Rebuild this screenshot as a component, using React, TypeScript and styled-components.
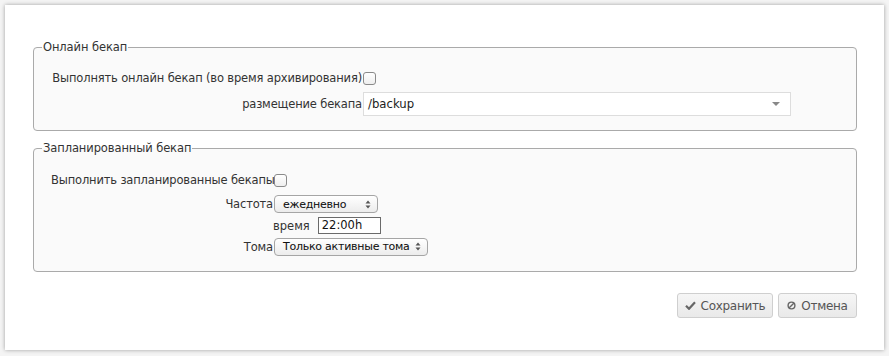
import React from "react";
import styled, { createGlobalStyle } from "styled-components";

const Global = createGlobalStyle`
  html, body { margin: 0; padding: 0; background: #f4f4f4; }
  body { font-family: "DejaVu Sans", Verdana, sans-serif; font-size: 12px; color: #333; }
`;

const Card = styled.div`
  margin: 5px;
  width: 879px;
  height: 345px;
  box-sizing: border-box;
  background: #fff;
  box-shadow: 0 0 4px rgba(0, 0, 0, 0.35);
  padding: 35px 27px 0 28px;
  display: flex;
  flex-direction: column;
  gap: 10px;
`;

const Fieldset = styled.fieldset<{ $h: number }>`
  margin: 0;
  height: ${(p) => p.$h}px;
  box-sizing: border-box;
  border: 1px solid #aaa;
  border-radius: 4px;
  background: #fafafa;
  padding: 10px 0 0 17px;
  min-width: 0;
`;

const Legend = styled.legend`
  padding: 0 1px;
  margin-left: -9px;
  font-size: 11.5px;
  letter-spacing: -0.1px;
  color: #333;
  line-height: 14px;
`;

const Grid = styled.div<{ $col: number; $rows: string }>`
  display: grid;
  grid-template-columns: ${(p) => p.$col}px auto;
  grid-template-rows: ${(p) => p.$rows};
  column-gap: 1px;
  align-items: center;
`;

const Label = styled.div`
  text-align: right;
  white-space: nowrap;
  line-height: 14px;
  font-size: 11.5px;
  letter-spacing: -0.16px;
  color: #333;
`;

const Check = styled.span`
  display: inline-block;
  width: 11px;
  height: 11px;
  border: 1px solid #8a8a8a;
  border-radius: 3px;
  background: linear-gradient(#fff, #eee);
  box-sizing: content-box;
`;

const Cell = styled.div`
  display: flex;
  align-items: center;
`;

const ComboBox = styled.div`
  width: 428px;
  height: 24px;
  box-sizing: border-box;
  border: 1px solid #ddd;
  background: #fff;
  display: flex;
  align-items: center;
  justify-content: space-between;
  padding: 0 10px 0 4px;
  font-size: 11.7px;
  color: #222;
`;

const MacSelect = styled.div<{ $w: number }>`
  width: ${(p) => p.$w}px;
  height: 18px;
  box-sizing: border-box;
  border: 1px solid #a5a5a5;
  border-radius: 4px;
  background: linear-gradient(#ffffff, #ececec);
  display: flex;
  align-items: center;
  justify-content: space-between;
  padding: 0 6px 0 8px;
  font-size: 11px;
  letter-spacing: -0.25px;
  white-space: nowrap;
  color: #111;
  -webkit-text-stroke: 0.05px #111;
`;

const TimeWrap = styled.div`
  display: flex;
  align-items: center;
  gap: 8px;
  margin-left: -1px;
  font-size: 11.5px;
`;

const TimeInput = styled.div`
  width: 63px;
  height: 17px;
  box-sizing: border-box;
  border: 1px solid #6a6a6a;
  background: #fff;
  padding: 0 3px;
  font-size: 11.5px;
  line-height: 15px;
  color: #111;
`;

const Footer = styled.div`
  display: flex;
  justify-content: flex-end;
  gap: 5px;
  margin-top: 11px;
`;

const Button = styled.div<{ $w: number }>`
  width: ${(p) => p.$w}px;
  height: 25px;
  box-sizing: border-box;
  border: 1px solid #cfcfcf;
  border-radius: 3px;
  background: linear-gradient(#f6f6f6, #e9e9e9);
  display: flex;
  align-items: center;
  justify-content: center;
  gap: 5px;
  font-size: 12px;
  letter-spacing: -0.3px;
  color: #555;
`;

const Arrows = () => (
  <svg width="6" height="9" viewBox="0 0 6 9">
    <path d="M3 0.5 L5.5 3.5 H0.5 Z M3 8.5 L5.5 5.5 H0.5 Z" fill="#555" />
  </svg>
);

export default function App() {
  return (
    <>
      <Global />
      <Card>
        <Fieldset $h={91}>
          <Legend>Онлайн бекап</Legend>
          <Grid $col={311} $rows="28px 24px">
            <Label>Выполнять онлайн бекап (во время архивирования)</Label>
            <Cell>
              <Check />
            </Cell>
            <Label>размещение бекапа</Label>
            <Cell>
              <ComboBox>
                <span>/backup</span>
                <svg width="8" height="4" viewBox="0 0 8 4">
                  <path d="M0 0 H8 L4 4 Z" fill="#888" />
                </svg>
              </ComboBox>
            </Cell>
          </Grid>
        </Fieldset>
        <Fieldset $h={131}>
          <Legend>Запланированный бекап</Legend>
          <Grid $col={222} $rows="30px 18px 25px 17px">
            <Label>Выполнить запланированные бекапы</Label>
            <Cell>
              <Check />
            </Cell>
            <Label>Частота</Label>
            <Cell>
              <MacSelect $w={104}>
                <span>ежедневно</span>
                <Arrows />
              </MacSelect>
            </Cell>
            <Label />
            <Cell>
              <TimeWrap>
                <span>время</span>
                <TimeInput>22:00h</TimeInput>
              </TimeWrap>
            </Cell>
            <Label>Тома</Label>
            <Cell>
              <MacSelect $w={154}>
                <span>Только активные тома</span>
                <Arrows />
              </MacSelect>
            </Cell>
          </Grid>
        </Fieldset>
        <Footer>
          <Button $w={96}>
            <svg width="11" height="9" viewBox="0 0 11 9">
              <path d="M1 4.8 L4 7.8 L10 1.2" stroke="#666" strokeWidth="2.2" fill="none" />
            </svg>
            Сохранить
          </Button>
          <Button $w={79}>
            <svg width="9" height="9" viewBox="0 0 9 9">
              <circle cx="4.5" cy="4.5" r="3.4" stroke="#666" strokeWidth="1.4" fill="none" />
              <path d="M2.2 6.8 L6.8 2.2" stroke="#666" strokeWidth="1.4" />
            </svg>
            Отмена
          </Button>
        </Footer>
      </Card>
    </>
  );
}
